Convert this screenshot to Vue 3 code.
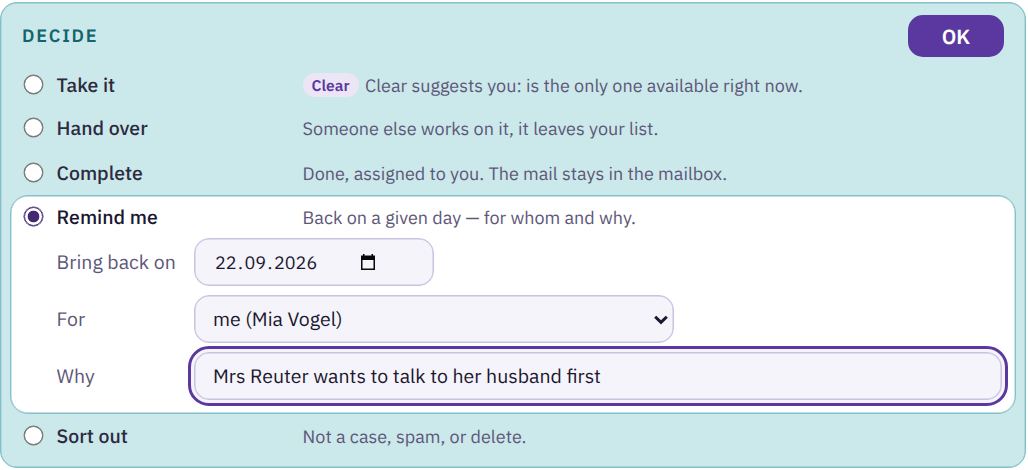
<script setup>
import {ref} from 'vue';

const selected = ref('remind');
const date = ref(['22', '09', '2026']);
const person = ref('me (Mia Vogel)');
const reason = ref('Mrs Reuter wants to talk to her husband first');

const options = [
  {id: 'take', label: 'Take it', badge: 'Clear', hint: 'Clear suggests you: is the only one available right now.'},
  {id: 'hand', label: 'Hand over', hint: 'Someone else works on it, it leaves your list.'},
  {id: 'complete', label: 'Complete', hint: 'Done, assigned to you. The mail stays in the mailbox.'},
  {id: 'remind', label: 'Remind me', hint: 'Back on a given day — for whom and why.'},
  {id: 'sort', label: 'Sort out', hint: 'Not a case, spam, or delete.'}
];
</script>

<template>
  <form class="decide" @submit.prevent>
    <header class="decide-head">
      <h2>DECIDE</h2>
      <button type="submit" class="ok">OK</button>
    </header>

    <div v-for="option in options" :key="option.id" :class="['option', option.id, selected === option.id && 'active']">
      <label class="option-row">
        <input v-model="selected" type="radio" name="decision" :value="option.id"/>
        <span class="option-label">{{ option.label }}</span>
        <span class="option-hint">
          <span v-if="option.badge" class="badge">{{ option.badge }}</span>
          <span class="hint-text">{{ option.hint }}</span>
        </span>
      </label>

      <div v-if="option.id === 'remind' && selected === 'remind'" class="fields">
        <label>Bring back on</label>
        <div class="control date" tabindex="0">
          <span>{{ date[0] }}</span><span class="dot">.</span><span>{{ date[1] }}</span><span class="dot">.</span><span>{{ date[2] }}</span>
          <svg class="calendar" viewBox="0 0 14 16" width="14" height="16">
            <path d="M2 0h1.5v1.5h7V0H12v1.5h2V16H0V1.5h2zM1.5 6v8.500h11V6z" fill="#080808" fill-rule="evenodd"/>
          </svg>
        </div>

        <label for="person">For</label>
        <div class="control person">
          <select id="person" v-model="person">
            <option>me (Mia Vogel)</option>
          </select>
          <svg class="chevron" viewBox="0 0 14 10" width="14" height="10">
            <path d="M1.2 1.7L7 7.4l5.8-5.700" fill="none" stroke="#1c1730" stroke-width="3"/>
          </svg>
        </div>

        <label for="reason">Why</label>
        <div class="control reason">
          <input id="reason" v-model="reason" type="text"/>
        </div>
      </div>
    </div>
  </form>
</template>

<style>
body {
  background: #fff;
}
</style>

<style scoped>
.decide {
  box-sizing: border-box;
  width: 1026px;
  height: 466px;
  margin-top: 2px;
  padding: 0 9px;
  border: 1px solid #84c0c7;
  border-radius: 17px;
  box-shadow: inset 0 0 0 0.4px #84c0c7;
  background: #cbe8eb;
  color: #2d2a40;
  font-family: "IBM Plex Sans", Roboto, "Liberation Sans", sans-serif;
  text-rendering: geometricPrecision;
  overflow: hidden;
}

.decide-head {
  display: flex;
  align-items: center;
  justify-content: space-between;
  height: 66px;
  padding: 0 12px;
}

h2 {
  margin: 0;
  padding-bottom: 2px;
  color: #12646d;
  font-size: 18px;
  font-weight: 600;
  letter-spacing: 1.8px;
}

.ok {
  width: 96px;
  height: 42px;
  padding: 0;
  border: none;
  border-radius: 15px;
  background: #5b389f;
  color: #fff;
  font-family: inherit;
  font-size: 20.5px;
  font-weight: 600;
  text-rendering: inherit;
}

.option-row {
  display: grid;
  grid-template-columns: 32.6px 246px 1fr;
  align-items: center;
  height: 44px;
  padding-left: 14px;
}

.option.take .option-row {
  height: 32px;
}

.option.hand .option-row {
  height: 54px;
}

.option.complete .option-row {
  height: 36px;
}

.option.active {
  box-sizing: border-box;
  width: 1006px;
  height: 219px;
  margin-top: 4px;
  border: 1px solid #84c0c7;
  border-radius: 18px;
  box-shadow: inset 0 0 0 0.4px #84c0c7;
  background: #fff;
  color: #1c1730;
}

.option.active .option-row {
  height: 42px;
  padding-left: 13px;
}

.option.sort .option-row {
  height: 44px;
}

input[type="radio"] {
  box-sizing: border-box;
  appearance: none;
  width: 19px;
  height: 19px;
  margin: 0 0 1px;
  border: 1px solid #767676;
  border-radius: 50%;
  box-shadow: 0 0 0 0.4px #767676;
  background: #fff;
}

input[type="radio"]:checked {
  border-color: #432874;
  box-shadow: 0 0 0 0.5px #432874;
  background: radial-gradient(circle, #432874 5.5px, #fff 6.2px);
}

.option-label {
  font-size: 19.5px;
  font-weight: 500;
}

.option-hint {
  display: flex;
  align-items: center;
  color: #5d5778;
  font-size: 18px;
  white-space: nowrap;
}

.badge {
  box-sizing: border-box;
  height: 24px;
  margin-right: 6.5px;
  padding: 1px 9px 0;
  border-radius: 12px;
  background: #ece5f6;
  color: #5b389f;
  font-size: 15.5px;
  font-weight: 600;
  line-height: 24px;
}

.fields {
  display: grid;
  grid-template-columns: 137.4px 1fr;
  grid-auto-rows: 48px;
  row-gap: 9px;
  align-items: center;
  padding: 0 13px 0 45.6px;
}

.fields label {
  color: #5d5778;
  font-size: 19.5px;
}

.control {
  box-sizing: border-box;
  display: flex;
  position: relative;
  height: 48px;
  color: #1c1730;
  font-size: 19.5px;
}

.date,
.control input,
.control select {
  box-sizing: border-box;
  appearance: none;
  height: 48px;
  margin: 0;
  border: 1px solid #c9c2e0;
  border-radius: 15px;
  outline: none;
  box-shadow: inset 0 0 0 0.5px #c9c2e0;
  background: #f5f4fa;
}

.control input,
.control select {
  width: 100%;
  padding: 0 18px;
  color: inherit;
  font-family: inherit;
  font-size: inherit;
  text-rendering: inherit;
}

.date {
  align-items: center;
  width: 240px;
  padding: 1px 20px 0;
  font-size: 18px;
}

.dot {
  padding: 0 1.5px;
}

.person {
  width: 480px;
}

.calendar {
  position: absolute;
  top: 15px;
  right: 58px;
}

.chevron {
  position: absolute;
  top: 20px;
  right: 6px;
}

.control.reason input {
  outline: 3px solid #5b389f;
  outline-offset: 3px;
  box-shadow: inset 0 0 0 0.5px #c9c2e0, 0 0 0 3px #f5f4fa;
}
</style>
